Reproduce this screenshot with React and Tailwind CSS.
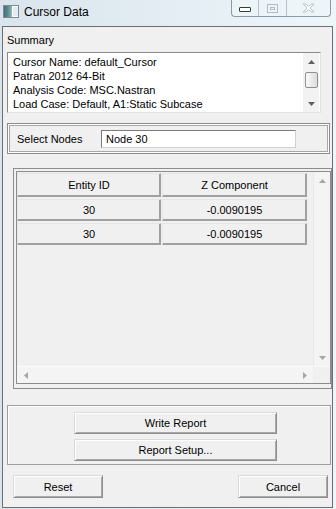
import React from "react";

const Tri = ({ dir, color }) => {
  const pts = {
    up: "0,4 3.5,0 7,4",
    down: "0,0 7,0 3.5,4",
    left: "4,0 4,7 0,3.5",
    right: "0,0 0,7 4,3.5",
  };
  const vertical = dir === "up" || dir === "down";
  return (
    <svg width={vertical ? 7 : 4} height={vertical ? 4 : 7} viewBox={vertical ? "0 0 7 4" : "0 0 4 7"}>
      <polygon points={pts[dir]} fill={color} />
    </svg>
  );
};

const btn =
  "flex items-center justify-center bg-[#f0f0f0] border border-t-[#dadada] border-l-[#dadada] border-r-[#8e8e8e] border-b-[#8e8e8e] shadow-[inset_1px_1px_0_#ffffff,inset_-1px_-1px_0_#a8a8a8] leading-[14px]";

const cell =
  "flex items-center justify-center bg-[#f0f0f0] border border-t-[#e6e6e6] border-l-[#e6e6e6] border-r-[#a0a0a0] border-b-[#a0a0a0] shadow-[inset_-1px_-1px_0_#a0a0a0] leading-[14px]";

const summaryLines = [
  "Cursor Name: default_Cursor",
  "Patran 2012 64-Bit",
  "Analysis Code: MSC.Nastran",
  "Load Case: Default, A1:Static Subcase",
];

const rows = [
  ["30", "-0.0090195"],
  ["30", "-0.0090195"],
];

export default function App() {
  return (
    <div className="w-[336px] h-[509px] overflow-hidden bg-linear-to-r from-[#d9e4ec] to-[#eef6fa] font-['Liberation_Sans',Arial,sans-serif] text-[11px] text-black">
      {/* title bar */}
      <div className="h-[26px] flex items-start">
        <svg className="mt-[5px] ml-[3px]" width="16" height="13" viewBox="0 0 16 13">
          <defs>
            <linearGradient id="ico" x1="0" y1="0" x2="1" y2="0">
              <stop offset="0" stopColor="#3f6f96" />
              <stop offset="0.5" stopColor="#5b8f7a" />
              <stop offset="1" stopColor="#9ab8c8" />
            </linearGradient>
          </defs>
          <rect x="0.5" y="0.5" width="15" height="12" fill="#ffffff" stroke="#7a8a98" />
          <rect x="1" y="1" width="8" height="11" fill="url(#ico)" />
          <rect x="10" y="2" width="5" height="9" fill="#e4ecf2" />
        </svg>
        <div className="ml-[5px] mt-[4px] text-[12px] leading-[16px]">Cursor Data</div>
        <div className="ml-auto mr-[5px] w-[100px] h-[17px] flex border border-t-0 border-[#8c9aa6] rounded-b-[4px] bg-[#eef5f9]/70">
          <div className="w-[27px] flex items-center justify-center border-r border-[#b4c0ca]">
            <div className="w-[12px] h-[5px] mt-[3px] border border-[#333a40] bg-white rounded-[1px]" />
          </div>
          <div className="w-[28px] flex items-center justify-center border-r border-[#b4c0ca]">
            <div className="w-[11px] h-[9px] border border-[#b0bcc6] flex items-center justify-center">
              <div className="w-[5px] h-[3px] border border-[#b0bcc6]" />
            </div>
          </div>
          <div className="flex-1 flex items-center justify-center">
            <svg width="13" height="10" viewBox="0 0 13 10">
              <path
                d="M1 1 H4 L6.5 3.5 L9 1 H12 L8 5 L12 9 H9 L6.5 6.5 L4 9 H1 L5 5 Z"
                fill="#ffffff"
                stroke="#b7c3cc"
                strokeWidth="1"
                strokeLinejoin="round"
              />
            </svg>
          </div>
        </div>
      </div>

      {/* client frame */}
      <div className="ml-[2px] w-[331px] h-[482px] border border-[#6e6e6e] bg-[#f0f0f0] flex flex-col">
        <div className="pl-[4px] pt-[6px] leading-[14px]">Summary</div>

        <div className="mt-[5px] ml-[4px] w-[314px] h-[61px] flex bg-white border border-t-[#8a8a8a] border-l-[#8a8a8a] border-r-[#e2e2e2] border-b-[#e2e2e2]">
          <div className="flex-1 pl-[5px] pt-[2px] leading-[14px]">
            {summaryLines.map((l) => (
              <div key={l}>{l}</div>
            ))}
          </div>
          <div className="w-[16px] mr-px flex flex-col bg-[#f2f2f2]">
            <div className="h-[17px] flex items-center justify-center">
              <Tri dir="up" color="#606060" />
            </div>
            <div className="mt-[2px] ml-[2px] w-[13px] h-[16px] rounded-[2px] border border-[#8f8f8f] bg-linear-to-r from-[#fafafa] to-[#dcdcdc]" />
            <div className="flex-1" />
            <div className="h-[17px] flex items-center justify-center">
              <Tri dir="down" color="#606060" />
            </div>
          </div>
        </div>

        <div className="mt-[10px] ml-[4px] w-[323px] h-[31px] border border-[#8c8c8c] bg-white p-px">
          <div className="h-full border border-[#a8a8a8] bg-[#f0f0f0] flex items-center pl-[7px]">
            <div className="w-[84px] leading-[14px]">Select Nodes</div>
            <div className="w-[195px] h-[18px] bg-white border border-t-[#7a7a7a] border-l-[#7a7a7a] border-r-[#d0d0d0] border-b-[#d0d0d0] pl-[4px] leading-[16px]">
              Node 30
            </div>
          </div>
        </div>

        <div className="mt-[14px] ml-[10px] w-[319px] h-[221px] border border-[#8c8c8c] pt-[2px] pl-[2px] pb-[4px]">
          <div className="h-full border border-[#8c8c8c] flex flex-col">
            <div className="flex-1 flex">
              <div className="flex-1 pt-px flex flex-col gap-y-[2px]">
                <div className="flex gap-x-px h-[24px]">
                  <div className={`${cell} w-[144px]`}>Entity ID</div>
                  <div className={`${cell} w-[145px]`}>Z Component</div>
                </div>
                {rows.map((r, i) => (
                  <div key={i} className="flex gap-x-px h-[22px]">
                    <div className={`${cell} w-[144px]`}>{r[0]}</div>
                    <div className={`${cell} w-[145px]`}>{r[1]}</div>
                  </div>
                ))}
              </div>
              <div className="w-[17px] flex flex-col justify-between bg-[#f4f4f4] border-l border-[#e8e8e8]">
                <div className="h-[17px] flex items-center justify-center">
                  <Tri dir="up" color="#a6a6a6" />
                </div>
                <div className="h-[17px] flex items-center justify-center">
                  <Tri dir="down" color="#a6a6a6" />
                </div>
              </div>
            </div>
            <div className="h-[17px] flex border-t border-[#fafafa]">
              <div className="flex-1 flex items-center justify-between bg-[#f4f4f4]">
                <div className="w-[17px] flex items-center justify-center">
                  <Tri dir="left" color="#a6a6a6" />
                </div>
                <div className="w-[17px] flex items-center justify-center">
                  <Tri dir="right" color="#a6a6a6" />
                </div>
              </div>
              <div className="w-[17px] bg-[#f0f0f0]" />
            </div>
          </div>
        </div>

        <div className="mt-[16px] ml-[4px] w-[324px] h-[60px] border border-[#a0a0a0] shadow-[inset_1px_1px_0_#ffffff] pt-[6px] pl-[66px] flex flex-col gap-[5px]">
          <div className={`${btn} w-[203px] h-[22px]`}>Write Report</div>
          <div className={`${btn} w-[203px] h-[22px]`}>Report Setup...</div>
        </div>

        <div className="mt-[10px] pl-[10px] pr-[4px] flex justify-between">
          <div className={`${btn} w-[90px] h-[23px]`}>Reset</div>
          <div className={`${btn} w-[90px] h-[23px]`}>Cancel</div>
        </div>
      </div>
    </div>
  );
}
